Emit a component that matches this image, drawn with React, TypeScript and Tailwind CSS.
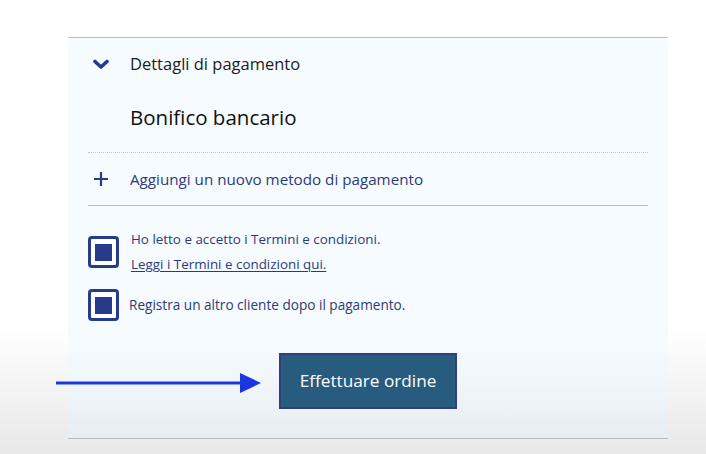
import React from 'react';

function Chevron() {
    return (
        <svg width="16" height="11" viewBox="0 0 16 11" className="block">
            <path d="M2 2.5 L8 8 L14 2.5" fill="none" stroke="#283a8a" strokeWidth="3.6" strokeLinecap="round" strokeLinejoin="round" />
        </svg>
    );
}

function Plus() {
    return (
        <svg width="16" height="16" viewBox="0 0 16 16" className="block">
            <path d="M8 1 V15 M1 8 H15" stroke="#2c3a80" strokeWidth="2.2" />
        </svg>
    );
}

function Checkbox() {
    return (
        <div className="w-[31px] h-[32px] shrink-0 rounded-[4px] border-[3px] border-[#283a8a] flex items-center justify-center bg-white">
            <div className="w-[17px] h-[17px] bg-[#283a8a]" />
        </div>
    );
}

export default function App() {
    return (
        <div
            className="relative h-[454px] w-[706px] overflow-hidden pt-[37px] bg-gradient-to-b from-white from-[72%] to-[#e8e8e8]"
            style={{ fontFamily: '"Open Sans", "Noto Sans", sans-serif' }}
        >
            <div className="ml-[68px] w-[600px] h-[402px] border-t border-b border-[#bdbdbd] bg-gradient-to-b from-[#f6fbff] from-[76%] to-[#e7eef3] px-5">
                {/* Header */}
                <div className="h-[52px] flex items-center">
                    <div className="w-[42px] pl-[5px]">
                        <Chevron />
                    </div>
                    <span className="text-[16.5px] text-[#1c1c1c]">Dettagli di pagamento</span>
                </div>

                <div className="h-[54px] flex items-center pl-[42px]">
                    <span className="text-[20.5px] text-[#111]">Bonifico bancario</span>
                </div>

                <div className="mt-[8px] border-t border-dotted border-[#c4c8cc]" />

                <div className="h-[52px] flex items-center">
                    <div className="w-[42px] pl-[5px]">
                        <Plus />
                    </div>
                    <span className="text-[15.2px] text-[#2e3a78]">Aggiungi un nuovo metodo di pagamento</span>
                </div>

                <div className="border-t border-[#bcbcbc]" />

                {/* Checkboxes */}
                <div className="mt-[30px] flex gap-3 h-[32px]">
                    <Checkbox />
                    <div className="flex flex-col text-[13.4px] text-[#2e3a78] leading-[18px]">
                        <span className="-mt-[6px]">Ho letto e accetto i Termini e condizioni.</span>
                        <a href="#" className="mt-[7px] underline underline-offset-2">Leggi i Termini e condizioni qui.</a>
                    </div>
                </div>

                <div className="mt-[21px] flex items-center gap-[10px]">
                    <Checkbox />
                    <span className="text-[13.6px] text-[#2e3a78]">Registra un altro cliente dopo il pagamento.</span>
                </div>

                <div className="mt-[32px] flex justify-center">
                    <button className="w-[178px] h-[56px] bg-[#275c7f] border-2 border-[#323f7a] text-white text-[17.2px]">
                        Effettuare ordine
                    </button>
                </div>
            </div>

            {/* annotation arrow */}
            <svg className="absolute left-[56px] top-[372px]" width="206" height="22" viewBox="0 0 206 22">
                <rect x="0" y="9.5" width="186" height="3" fill="#1b36e0" />
                <path d="M184 1 L205 11 L184 21 Z" fill="#1b36e0" />
            </svg>
        </div>
    );
}
